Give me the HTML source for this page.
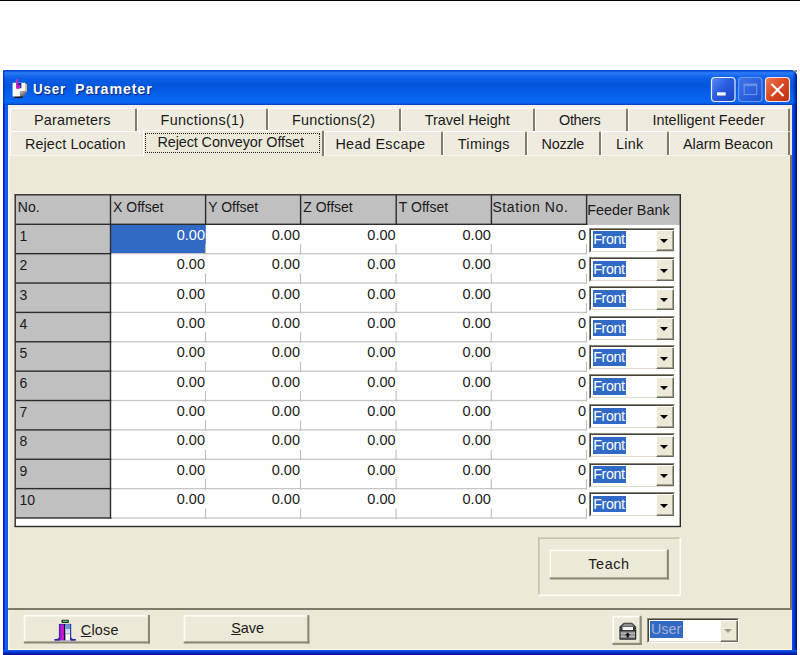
<!DOCTYPE html>
<html>
<head>
<meta charset="utf-8">
<title>User Parameter</title>
<style>
html,body{margin:0;padding:0;background:#fff;}
body{width:800px;height:655px;position:relative;overflow:hidden;font-family:"Liberation Sans",sans-serif;font-size:14.4px;color:#1a1a1a;}
.abs,.abs>*{position:absolute;}
div{box-sizing:border-box;}
#topline{left:0;top:0;width:800px;height:1px;background:#000;}
#win{left:2.8px;top:70px;width:794.4px;height:600px;border-radius:1.5px 6.5px 0 0;background:linear-gradient(90deg,#0019cf 0,#0422d4 1.2px,#1a5cf0 2.4px,#0f62e4 3.6px,#0a5add 5px,#0a5add calc(100% - 5.4px),#1c54dc calc(100% - 5px),#0444e4 calc(100% - 3.8px),#0030c0 calc(100% - 2.2px),#00138c calc(100% - 0.8px),#00138c 100%);}
#winb{left:2.8px;top:649.8px;width:794.4px;height:6px;background:linear-gradient(#2464f2 0,#0a48e4 1px,#0438dd 2px,#0024b0 3.4px,#001890 4.6px,#001588 6px);}
#titlebar{left:3px;top:70px;width:794px;height:35px;border-radius:1.5px 6.5px 0 0;
 background:linear-gradient(90deg,rgba(0,25,200,.75) 0,rgba(0,25,200,0) 2.5px,rgba(0,20,150,0) calc(100% - 4px),rgba(0,22,150,.55) calc(100% - 2px),rgba(0,16,130,.9) 100%),linear-gradient(#0a4cd6 0%,#0a50da 3%,#2c7cf4 8%,#1a6cf0 15%,#0a5ee6 26%,#0356dc 45%,#0560ea 70%,#0a68f4 90%,#0a5ee8 95%,#0540c0 99%);}
#title{top:81px;color:#fff;font-weight:bold;font-size:15px;letter-spacing:0.9px;text-shadow:1px 1px 1px #0a1e7a;white-space:pre;line-height:16px;}
#title span{position:absolute;top:0;display:inline-block;transform-origin:0 50%;}
#t1{transform:scaleX(0.895);} #t2{transform:scaleX(0.952);}
#client{left:8px;top:105px;width:784px;height:544.8px;background:#ece9d8;}
.tab{position:absolute;height:23px;background:#efecdf;border-left:1px solid #fff;border-top:1px solid #fff;border-right:2px solid #807d6a;border-radius:2px 2px 0 0;text-align:center;white-space:nowrap;line-height:16px;padding-top:3px;}
.ttx{position:absolute;white-space:nowrap;line-height:16px;}
.tab.sel{background:#ece9d8;}
.btn{position:absolute;background:#ece9d8;border-top:1px solid #fff;border-left:1px solid #fff;border-right:1px solid #6c6a5c;border-bottom:1px solid #6c6a5c;box-shadow:inset -1px -1px 0 #a5a290;text-align:center;white-space:nowrap;}
.hdr{position:absolute;background:#c0c0c0;border-right:1.5px solid #2a2a2a;border-bottom:1.5px solid #2a2a2a;white-space:nowrap;line-height:16px;font-size:14px;}
.num{position:absolute;text-align:right;white-space:nowrap;line-height:16px;font-size:14.5px;}
.txt{position:absolute;white-space:nowrap;line-height:16px;font-size:14px;}
.hl{position:absolute;background:#c4c4c4;height:1px;}
.tick{position:absolute;background:#c8c8c8;width:1px;}
.combo{position:absolute;background:#fff;border-top:1px solid #8a8774;border-left:1px solid #8a8774;border-right:1px solid #fff;border-bottom:1px solid #fff;}
.combo .in{position:absolute;left:0;top:0;right:0;bottom:0;border-top:1.5px solid #45433c;border-left:1.5px solid #45433c;border-right:1px solid #dedbcc;border-bottom:1px solid #dedbcc;}
.combo .sel{position:absolute;left:2.6px;top:2.9px;width:33.6px;height:16.6px;background:#316ac5;color:#fff;line-height:16px;font-size:14.3px;letter-spacing:-0.45px;padding-left:0.7px;white-space:nowrap;}
.combo .dd{position:absolute;right:-0.4px;top:1.4px;width:18.6px;bottom:0.2px;background:#ece9d8;border-top:1px solid #fffef8;border-left:1px solid #fffef8;border-right:1px solid #6a685c;border-bottom:1px solid #6a685c;box-shadow:inset -1px -1px 0 #a8a592;}
.combo .dd:after{content:"";position:absolute;left:3.6px;top:8.2px;border-left:4.4px solid transparent;border-right:4.4px solid transparent;border-top:4.8px solid #000;}
.combo .dd.usr:after{border-top-color:#a09d8c;}
</style>
</head>
<body>
<div id="topline" class="abs"></div>
<div id="win" class="abs"></div>
<div id="titlebar" class="abs"></div>
<svg class="abs" style="left:10px;top:76px" width="20" height="24" viewBox="10 76 20 24">
<defs><linearGradient id="gs" x1="0" y1="0" x2="1" y2="1"><stop offset="0" stop-color="#e0d8cc"/><stop offset=".55" stop-color="#8c8890"/><stop offset="1" stop-color="#1c1c30"/></linearGradient></defs>
<path d="M19.8 90.6 L25 90.6 L27.2 91.6 L22.6 97.6 L14.2 97.8 L13 96 L19.8 96 Z" fill="url(#gs)"/>
<path d="M14.2 96.4 L23 96.4 L22.2 98.1 L14.6 98.1 Z" fill="#0c0c20" opacity=".9"/>
<path d="M12.6 82.8 L25 82.8 L25 91 L19.9 91 L19.9 96.2 L12.6 96.2 Z" fill="#fbfaf6"/>
<path d="M25 82.8 L27 84.4 L27 91.8 L25 91 Z" fill="#cdbd9c"/>
<rect x="16.2" y="83" width="5.2" height="5.2" fill="#1f2f96"/>
<path d="M16.9 79.6 L16.9 86.6 Q16.9 88.4 18.4 88.2 Q19.6 88 19.4 85.6" stroke="#d820c8" stroke-width="1.7" fill="none" stroke-linecap="round"/>
</svg>
<div id="title" class="abs" style="left:0;width:300px;height:16px"><span id="t1" style="left:33.4px">User</span> <span id="t2" style="left:74.6px">Parameter</span></div>
<svg class="abs" style="left:710px;top:76px" width="82" height="27" viewBox="0 0 82 27">
<defs>
<linearGradient id="gb" x1="0" y1="0" x2="1" y2="1"><stop offset="0" stop-color="#5c8cf4"/><stop offset=".45" stop-color="#2a5ce0"/><stop offset="1" stop-color="#1a44c4"/></linearGradient>
<linearGradient id="gd" x1="0" y1="0" x2="1" y2="1"><stop offset="0" stop-color="#3f74ec"/><stop offset="1" stop-color="#1c50d4"/></linearGradient>
<linearGradient id="gr" x1="0" y1="0" x2="1" y2="1"><stop offset="0" stop-color="#ee7a58"/><stop offset=".45" stop-color="#dc4a24"/><stop offset="1" stop-color="#b8300c"/></linearGradient>
</defs>
<rect x="1.5" y="1.5" width="23.5" height="24" rx="3.5" fill="url(#gb)" stroke="#e8eefc" stroke-width="1.2"/>
<rect x="7" y="16.3" width="8.6" height="3.2" fill="#fff"/>
<rect x="28.5" y="1.5" width="23.5" height="24" rx="3.5" fill="url(#gd)" stroke="#6f98f2" stroke-width="1.2"/>
<rect x="34.2" y="8.5" width="12.4" height="10" fill="none" stroke="#6a8fe6" stroke-width="1.2"/>
<rect x="33.6" y="7.5" width="13.6" height="2.6" fill="#6a8fe6"/>
<rect x="55.5" y="1.5" width="24" height="24" rx="3.5" fill="url(#gr)" stroke="#f4e4dc" stroke-width="1.2"/>
<path d="M61.5 8 L73.5 20 M73.5 8 L61.5 20" stroke="#fff" stroke-width="2.1" stroke-linecap="butt"/>
</svg>
<div class="abs" style="left:792.5px;top:70px;width:4.7px;height:2.2px;background:linear-gradient(90deg,rgba(125,124,84,0),#7e7d58 70%,#8c8b6a)"></div>
<div id="client" class="abs"></div>
<div id="winb" class="abs"></div>
<div class="abs" style="left:8px;top:105px;width:2px;height:545px;background:#f6f4ea"></div>
<div class="abs" style="left:8px;top:105px;width:784px;height:3px;background:#f4f2e8"></div>
<div class="tab" style="left:10px;top:108px;width:127px;"></div>
<div class="ttx" style="left:34.00px;top:111.5px;letter-spacing:0.222px">Parameters</div>
<div class="tab" style="left:137px;top:108px;width:131px;"></div>
<div class="ttx" style="left:160.50px;top:111.5px;letter-spacing:0.341px">Functions(1)</div>
<div class="tab" style="left:268px;top:108px;width:133px;"></div>
<div class="ttx" style="left:292.00px;top:111.5px;letter-spacing:0.273px">Functions(2)</div>
<div class="tab" style="left:401px;top:108px;width:134px;"></div>
<div class="ttx" style="left:424.80px;top:111.5px;letter-spacing:-0.008px">Travel Height</div>
<div class="tab" style="left:535px;top:108px;width:93px;"></div>
<div class="ttx" style="left:559.00px;top:111.5px;letter-spacing:-0.300px">Others</div>
<div class="tab" style="left:628px;top:108px;width:162px;"></div>
<div class="ttx" style="left:652.40px;top:111.5px;letter-spacing:0.065px">Intelligent Feeder</div>
<div class="tab" style="left:10px;top:131px;width:131px;height:24px;border-right:none;"></div>
<div class="ttx" style="left:25.00px;top:136px;letter-spacing:0.086px">Reject Location</div>
<div class="tab" style="left:324px;top:131px;width:119px;height:24px;"></div>
<div class="ttx" style="left:335.40px;top:136px;letter-spacing:0.330px">Head Escape</div>
<div class="tab" style="left:443px;top:131px;width:84px;height:24px;"></div>
<div class="ttx" style="left:457.80px;top:136px;letter-spacing:0.317px">Timings</div>
<div class="tab" style="left:527px;top:131px;width:74px;height:24px;"></div>
<div class="ttx" style="left:541.60px;top:136px;letter-spacing:-0.260px">Nozzle</div>
<div class="tab" style="left:601px;top:131px;width:67.5px;height:24px;"></div>
<div class="ttx" style="left:616.00px;top:136px;letter-spacing:0.233px">Link</div>
<div class="tab" style="left:668.5px;top:131px;width:121.5px;height:24px;"></div>
<div class="ttx" style="left:683.00px;top:136px;letter-spacing:-0.045px">Alarm Beacon</div>
<div class="abs" style="left:10px;top:155px;width:780px;height:1px;background:#f8f6ee"></div>
<div class="tab sel" style="left:143px;top:130px;width:181px;height:26px;"><div style="position:absolute;left:1px;top:2px;right:2px;bottom:3px;border:1px dotted #222"></div></div>
<div class="ttx" style="left:157.50px;top:133.8px;letter-spacing:-0.095px">Reject Conveyor Offset</div>
<div class="abs" style="left:790px;top:155px;width:2px;height:455px;background:#77745f"></div>
<svg class="abs" style="left:0;top:0" width="800" height="655" viewBox="0 0 800 655"><rect x="15.20" y="194.80" width="665.10" height="331.70" fill="#fff"/><rect x="15.20" y="194.80" width="665.10" height="29.50" fill="#c0c0c0"/><rect x="586.60" y="194.80" width="93.70" height="30.10" fill="#c0c0c0"/><rect x="15.20" y="194.80" width="95.30" height="323.20" fill="#c0c0c0"/><rect x="111.00" y="224.80" width="94.80" height="28.77" fill="#316ac5"/><rect x="110.50" y="253.02" width="476.10" height="1.30" fill="#c6c6c6"/><rect x="204.95" y="244.17" width="1.10" height="10.40" fill="#bdbdbd"/><rect x="299.95" y="244.17" width="1.10" height="10.40" fill="#bdbdbd"/><rect x="395.55" y="244.17" width="1.10" height="10.40" fill="#bdbdbd"/><rect x="490.75" y="244.17" width="1.10" height="10.40" fill="#bdbdbd"/><rect x="585.95" y="244.17" width="1.10" height="10.40" fill="#bdbdbd"/><rect x="110.50" y="282.39" width="476.10" height="1.30" fill="#c6c6c6"/><rect x="204.95" y="273.54" width="1.10" height="10.40" fill="#bdbdbd"/><rect x="299.95" y="273.54" width="1.10" height="10.40" fill="#bdbdbd"/><rect x="395.55" y="273.54" width="1.10" height="10.40" fill="#bdbdbd"/><rect x="490.75" y="273.54" width="1.10" height="10.40" fill="#bdbdbd"/><rect x="585.95" y="273.54" width="1.10" height="10.40" fill="#bdbdbd"/><rect x="110.50" y="311.76" width="476.10" height="1.30" fill="#c6c6c6"/><rect x="204.95" y="302.91" width="1.10" height="10.40" fill="#bdbdbd"/><rect x="299.95" y="302.91" width="1.10" height="10.40" fill="#bdbdbd"/><rect x="395.55" y="302.91" width="1.10" height="10.40" fill="#bdbdbd"/><rect x="490.75" y="302.91" width="1.10" height="10.40" fill="#bdbdbd"/><rect x="585.95" y="302.91" width="1.10" height="10.40" fill="#bdbdbd"/><rect x="110.50" y="341.13" width="476.10" height="1.30" fill="#c6c6c6"/><rect x="204.95" y="332.28" width="1.10" height="10.40" fill="#bdbdbd"/><rect x="299.95" y="332.28" width="1.10" height="10.40" fill="#bdbdbd"/><rect x="395.55" y="332.28" width="1.10" height="10.40" fill="#bdbdbd"/><rect x="490.75" y="332.28" width="1.10" height="10.40" fill="#bdbdbd"/><rect x="585.95" y="332.28" width="1.10" height="10.40" fill="#bdbdbd"/><rect x="110.50" y="370.50" width="476.10" height="1.30" fill="#c6c6c6"/><rect x="204.95" y="361.65" width="1.10" height="10.40" fill="#bdbdbd"/><rect x="299.95" y="361.65" width="1.10" height="10.40" fill="#bdbdbd"/><rect x="395.55" y="361.65" width="1.10" height="10.40" fill="#bdbdbd"/><rect x="490.75" y="361.65" width="1.10" height="10.40" fill="#bdbdbd"/><rect x="585.95" y="361.65" width="1.10" height="10.40" fill="#bdbdbd"/><rect x="110.50" y="399.87" width="476.10" height="1.30" fill="#c6c6c6"/><rect x="204.95" y="391.02" width="1.10" height="10.40" fill="#bdbdbd"/><rect x="299.95" y="391.02" width="1.10" height="10.40" fill="#bdbdbd"/><rect x="395.55" y="391.02" width="1.10" height="10.40" fill="#bdbdbd"/><rect x="490.75" y="391.02" width="1.10" height="10.40" fill="#bdbdbd"/><rect x="585.95" y="391.02" width="1.10" height="10.40" fill="#bdbdbd"/><rect x="110.50" y="429.24" width="476.10" height="1.30" fill="#c6c6c6"/><rect x="204.95" y="420.39" width="1.10" height="10.40" fill="#bdbdbd"/><rect x="299.95" y="420.39" width="1.10" height="10.40" fill="#bdbdbd"/><rect x="395.55" y="420.39" width="1.10" height="10.40" fill="#bdbdbd"/><rect x="490.75" y="420.39" width="1.10" height="10.40" fill="#bdbdbd"/><rect x="585.95" y="420.39" width="1.10" height="10.40" fill="#bdbdbd"/><rect x="110.50" y="458.61" width="476.10" height="1.30" fill="#c6c6c6"/><rect x="204.95" y="449.76" width="1.10" height="10.40" fill="#bdbdbd"/><rect x="299.95" y="449.76" width="1.10" height="10.40" fill="#bdbdbd"/><rect x="395.55" y="449.76" width="1.10" height="10.40" fill="#bdbdbd"/><rect x="490.75" y="449.76" width="1.10" height="10.40" fill="#bdbdbd"/><rect x="585.95" y="449.76" width="1.10" height="10.40" fill="#bdbdbd"/><rect x="110.50" y="487.98" width="476.10" height="1.30" fill="#c6c6c6"/><rect x="204.95" y="479.13" width="1.10" height="10.40" fill="#bdbdbd"/><rect x="299.95" y="479.13" width="1.10" height="10.40" fill="#bdbdbd"/><rect x="395.55" y="479.13" width="1.10" height="10.40" fill="#bdbdbd"/><rect x="490.75" y="479.13" width="1.10" height="10.40" fill="#bdbdbd"/><rect x="585.95" y="479.13" width="1.10" height="10.40" fill="#bdbdbd"/><rect x="110.50" y="517.35" width="476.10" height="1.30" fill="#c6c6c6"/><rect x="204.95" y="508.50" width="1.10" height="10.40" fill="#bdbdbd"/><rect x="299.95" y="508.50" width="1.10" height="10.40" fill="#bdbdbd"/><rect x="395.55" y="508.50" width="1.10" height="10.40" fill="#bdbdbd"/><rect x="490.75" y="508.50" width="1.10" height="10.40" fill="#bdbdbd"/><rect x="585.95" y="508.50" width="1.10" height="10.40" fill="#bdbdbd"/><rect x="15.20" y="223.60" width="572.10" height="1.40" fill="#2c2c2c"/><rect x="109.80" y="194.80" width="1.40" height="30.20" fill="#2c2c2c"/><rect x="204.90" y="194.80" width="1.40" height="30.20" fill="#2c2c2c"/><rect x="299.90" y="194.80" width="1.40" height="30.20" fill="#2c2c2c"/><rect x="395.50" y="194.80" width="1.40" height="30.20" fill="#2c2c2c"/><rect x="490.70" y="194.80" width="1.40" height="30.20" fill="#2c2c2c"/><rect x="585.90" y="194.80" width="1.40" height="30.20" fill="#2c2c2c"/><rect x="109.80" y="224.30" width="1.40" height="294.40" fill="#2c2c2c"/><rect x="15.20" y="252.97" width="96.00" height="1.40" fill="#2c2c2c"/><rect x="15.20" y="282.34" width="96.00" height="1.40" fill="#2c2c2c"/><rect x="15.20" y="311.71" width="96.00" height="1.40" fill="#2c2c2c"/><rect x="15.20" y="341.08" width="96.00" height="1.40" fill="#2c2c2c"/><rect x="15.20" y="370.45" width="96.00" height="1.40" fill="#2c2c2c"/><rect x="15.20" y="399.82" width="96.00" height="1.40" fill="#2c2c2c"/><rect x="15.20" y="429.19" width="96.00" height="1.40" fill="#2c2c2c"/><rect x="15.20" y="458.56" width="96.00" height="1.40" fill="#2c2c2c"/><rect x="15.20" y="487.93" width="96.00" height="1.40" fill="#2c2c2c"/><rect x="15.20" y="517.30" width="96.00" height="1.40" fill="#2c2c2c"/><rect x="14.50" y="194.10" width="666.50" height="1.40" fill="#2c2c2c"/><rect x="14.50" y="525.80" width="666.50" height="1.40" fill="#2c2c2c"/><rect x="14.50" y="194.80" width="1.40" height="331.70" fill="#2c2c2c"/><rect x="679.60" y="194.80" width="1.40" height="331.70" fill="#2c2c2c"/></svg>
<div class="txt" style="left:17.80px;top:199.2px;">No.</div>
<div class="txt" style="left:113.10px;top:199.2px;">X Offset</div>
<div class="txt" style="left:208.20px;top:199.2px;">Y Offset</div>
<div class="txt" style="left:303.20px;top:199.2px;">Z Offset</div>
<div class="txt" style="left:398.80px;top:199.2px;">T Offset</div>
<div class="txt" style="left:494.00px;top:199.2px;letter-spacing:0.62px;margin-left:-1.6px;">Station No.</div>
<div class="txt" style="left:587.2px;top:202px;font-size:14.4px">Feeder Bank</div>
<div class="txt" style="left:19.40px;top:227.90px">1</div>
<div class="num" style="left:110.50px;top:226.80px;width:94.50px;color:#fff">0.00</div>
<div class="num" style="left:205.60px;top:226.80px;width:94.40px">0.00</div>
<div class="num" style="left:300.60px;top:226.80px;width:95.00px">0.00</div>
<div class="num" style="left:396.20px;top:226.80px;width:94.60px">0.00</div>
<div class="num" style="left:491.40px;top:226.80px;width:94.60px">0</div>
<div class="combo" style="left:589px;top:227.60px;width:85.8px;height:25px"><div class="in"></div><div class="sel">Front</div><div class="dd"></div></div>
<div class="txt" style="left:19.40px;top:257.27px">2</div>
<div class="num" style="left:110.50px;top:256.17px;width:94.50px">0.00</div>
<div class="num" style="left:205.60px;top:256.17px;width:94.40px">0.00</div>
<div class="num" style="left:300.60px;top:256.17px;width:95.00px">0.00</div>
<div class="num" style="left:396.20px;top:256.17px;width:94.60px">0.00</div>
<div class="num" style="left:491.40px;top:256.17px;width:94.60px">0</div>
<div class="combo" style="left:589px;top:256.97px;width:85.8px;height:25px"><div class="in"></div><div class="sel">Front</div><div class="dd"></div></div>
<div class="txt" style="left:19.40px;top:286.64px">3</div>
<div class="num" style="left:110.50px;top:285.54px;width:94.50px">0.00</div>
<div class="num" style="left:205.60px;top:285.54px;width:94.40px">0.00</div>
<div class="num" style="left:300.60px;top:285.54px;width:95.00px">0.00</div>
<div class="num" style="left:396.20px;top:285.54px;width:94.60px">0.00</div>
<div class="num" style="left:491.40px;top:285.54px;width:94.60px">0</div>
<div class="combo" style="left:589px;top:286.34px;width:85.8px;height:25px"><div class="in"></div><div class="sel">Front</div><div class="dd"></div></div>
<div class="txt" style="left:19.40px;top:316.01px">4</div>
<div class="num" style="left:110.50px;top:314.91px;width:94.50px">0.00</div>
<div class="num" style="left:205.60px;top:314.91px;width:94.40px">0.00</div>
<div class="num" style="left:300.60px;top:314.91px;width:95.00px">0.00</div>
<div class="num" style="left:396.20px;top:314.91px;width:94.60px">0.00</div>
<div class="num" style="left:491.40px;top:314.91px;width:94.60px">0</div>
<div class="combo" style="left:589px;top:315.71px;width:85.8px;height:25px"><div class="in"></div><div class="sel">Front</div><div class="dd"></div></div>
<div class="txt" style="left:19.40px;top:345.38px">5</div>
<div class="num" style="left:110.50px;top:344.28px;width:94.50px">0.00</div>
<div class="num" style="left:205.60px;top:344.28px;width:94.40px">0.00</div>
<div class="num" style="left:300.60px;top:344.28px;width:95.00px">0.00</div>
<div class="num" style="left:396.20px;top:344.28px;width:94.60px">0.00</div>
<div class="num" style="left:491.40px;top:344.28px;width:94.60px">0</div>
<div class="combo" style="left:589px;top:345.08px;width:85.8px;height:25px"><div class="in"></div><div class="sel">Front</div><div class="dd"></div></div>
<div class="txt" style="left:19.40px;top:374.75px">6</div>
<div class="num" style="left:110.50px;top:373.65px;width:94.50px">0.00</div>
<div class="num" style="left:205.60px;top:373.65px;width:94.40px">0.00</div>
<div class="num" style="left:300.60px;top:373.65px;width:95.00px">0.00</div>
<div class="num" style="left:396.20px;top:373.65px;width:94.60px">0.00</div>
<div class="num" style="left:491.40px;top:373.65px;width:94.60px">0</div>
<div class="combo" style="left:589px;top:374.45px;width:85.8px;height:25px"><div class="in"></div><div class="sel">Front</div><div class="dd"></div></div>
<div class="txt" style="left:19.40px;top:404.12px">7</div>
<div class="num" style="left:110.50px;top:403.02px;width:94.50px">0.00</div>
<div class="num" style="left:205.60px;top:403.02px;width:94.40px">0.00</div>
<div class="num" style="left:300.60px;top:403.02px;width:95.00px">0.00</div>
<div class="num" style="left:396.20px;top:403.02px;width:94.60px">0.00</div>
<div class="num" style="left:491.40px;top:403.02px;width:94.60px">0</div>
<div class="combo" style="left:589px;top:403.82px;width:85.8px;height:25px"><div class="in"></div><div class="sel">Front</div><div class="dd"></div></div>
<div class="txt" style="left:19.40px;top:433.49px">8</div>
<div class="num" style="left:110.50px;top:432.39px;width:94.50px">0.00</div>
<div class="num" style="left:205.60px;top:432.39px;width:94.40px">0.00</div>
<div class="num" style="left:300.60px;top:432.39px;width:95.00px">0.00</div>
<div class="num" style="left:396.20px;top:432.39px;width:94.60px">0.00</div>
<div class="num" style="left:491.40px;top:432.39px;width:94.60px">0</div>
<div class="combo" style="left:589px;top:433.19px;width:85.8px;height:25px"><div class="in"></div><div class="sel">Front</div><div class="dd"></div></div>
<div class="txt" style="left:19.40px;top:462.86px">9</div>
<div class="num" style="left:110.50px;top:461.76px;width:94.50px">0.00</div>
<div class="num" style="left:205.60px;top:461.76px;width:94.40px">0.00</div>
<div class="num" style="left:300.60px;top:461.76px;width:95.00px">0.00</div>
<div class="num" style="left:396.20px;top:461.76px;width:94.60px">0.00</div>
<div class="num" style="left:491.40px;top:461.76px;width:94.60px">0</div>
<div class="combo" style="left:589px;top:462.56px;width:85.8px;height:25px"><div class="in"></div><div class="sel">Front</div><div class="dd"></div></div>
<div class="txt" style="left:19.40px;top:492.23px">10</div>
<div class="num" style="left:110.50px;top:491.13px;width:94.50px">0.00</div>
<div class="num" style="left:205.60px;top:491.13px;width:94.40px">0.00</div>
<div class="num" style="left:300.60px;top:491.13px;width:95.00px">0.00</div>
<div class="num" style="left:396.20px;top:491.13px;width:94.60px">0.00</div>
<div class="num" style="left:491.40px;top:491.13px;width:94.60px">0</div>
<div class="combo" style="left:589px;top:491.93px;width:85.8px;height:25px"><div class="in"></div><div class="sel">Front</div><div class="dd"></div></div>
<svg class="abs" style="left:0;top:0" width="800" height="655" viewBox="0 0 800 655"><rect x="538.10" y="537.40" width="142.90" height="1.50" fill="#c3c0ad"/><rect x="538.10" y="537.40" width="1.50" height="58.70" fill="#c3c0ad"/><rect x="538.10" y="594.60" width="142.90" height="1.50" fill="#fffef5"/><rect x="679.50" y="537.40" width="1.50" height="58.70" fill="#fffef5"/><rect x="549.70" y="549.60" width="119.20" height="29.90" fill="#ece9d8"/><rect x="549.70" y="549.60" width="119.20" height="1.50" fill="#fffef8"/><rect x="549.70" y="549.60" width="1.50" height="29.90" fill="#fffef8"/><rect x="549.70" y="577.40" width="119.20" height="2.10" fill="#8a8775"/><rect x="666.80" y="549.60" width="2.10" height="29.90" fill="#8a8775"/></svg>
<div class="ttx" style="left:588.3px;top:556.1px;letter-spacing:0.6px">Teach</div>
<div class="abs" style="left:8px;top:608.3px;width:784px;height:2.2px;background:#7d7a68"></div>
<div class="abs" style="left:8px;top:610.5px;width:782px;height:1px;background:#efecdf"></div>
<div class="abs" style="left:8px;top:648.6px;width:784px;height:1.2px;background:#fffef6"></div>
<svg class="abs" style="left:0;top:0" width="800" height="655" viewBox="0 0 800 655"><rect x="23.80" y="615.00" width="126.20" height="28.50" fill="#ece9d8"/><rect x="23.80" y="615.00" width="126.20" height="1.50" fill="#fffef8"/><rect x="23.80" y="615.00" width="1.50" height="28.50" fill="#fffef8"/><rect x="23.80" y="641.40" width="126.20" height="2.10" fill="#8a8775"/><rect x="147.90" y="615.00" width="2.10" height="28.50" fill="#8a8775"/></svg>
<svg class="abs" style="left:53px;top:618px" width="25" height="24" viewBox="53 618 25 24">
<rect x="61.5" y="619.8" width="7.4" height="3.1" rx=".8" fill="#1c2c20"/>
<rect x="62.8" y="620.6" width="4.8" height="1.5" fill="#38d060"/>
<rect x="58.9" y="623.9" width="12.3" height="16.4" fill="#2020a0"/>
<rect x="59.9" y="624.6" width="4.3" height="15.6" fill="#c418c8"/>
<rect x="59.2" y="624.6" width="1.3" height="15.6" fill="#5028b8"/>
<rect x="64.1" y="624.2" width="1.3" height="16" fill="#101028"/>
<rect x="65.4" y="624.6" width="4.7" height="15.6" fill="#f4f6fa"/>
<rect x="65.4" y="624.6" width="4.7" height="4.4" fill="#6898dc"/>
<rect x="65.4" y="629.6" width="4.7" height="1" fill="#a8c4e8"/>
<rect x="65.4" y="631.4" width="4.7" height="1" fill="#b8cce8"/>
<rect x="65.4" y="633.2" width="4.7" height="1" fill="#90a0c0"/>
<path d="M54.6 639.4 Q58 639.6 59.2 637.6 L59.2 640.4 L54.8 640.4 Z" fill="#2828a0"/>
<path d="M75.6 639.4 Q72.2 639.6 71 637.6 L71 640.4 L75.4 640.4 Z" fill="#2828a0"/>
<path d="M54.4 639.7 L59.4 639.7 M70.8 639.7 L75.8 639.7" stroke="#2828a0" stroke-width="1.4"/>
</svg>
<svg class="abs" style="left:0;top:0" width="800" height="655" viewBox="0 0 800 655"><rect x="183.70" y="615.10" width="125.70" height="28.40" fill="#ece9d8"/><rect x="183.70" y="615.10" width="125.70" height="1.50" fill="#fffef8"/><rect x="183.70" y="615.10" width="1.50" height="28.40" fill="#fffef8"/><rect x="183.70" y="641.40" width="125.70" height="2.10" fill="#8a8775"/><rect x="307.30" y="615.10" width="2.10" height="28.40" fill="#8a8775"/></svg>
<div class="ttx" style="left:80.8px;top:622.3px;letter-spacing:0.2px"><u>C</u>lose</div>
<div class="ttx" style="left:231.2px;top:620px"><u>S</u>ave</div>
<svg class="abs" style="left:0;top:0" width="800" height="655" viewBox="0 0 800 655"><rect x="612.40" y="615.80" width="29.40" height="29.20" fill="#ece9d8"/><rect x="612.40" y="615.80" width="29.40" height="1.60" fill="#fffef8"/><rect x="612.40" y="615.80" width="1.60" height="29.20" fill="#fffef8"/><rect x="612.40" y="642.80" width="29.40" height="2.20" fill="#8f8c7a"/><rect x="639.60" y="615.80" width="2.20" height="29.20" fill="#8f8c7a"/></svg>
<svg class="abs" style="left:616px;top:620px" width="24" height="22" viewBox="616 620 24 22">
<path d="M619.4 631 L619.4 626.8 L623.8 622.8 L632 622.8 L636.2 626.8 L636.2 631 Z" fill="#3c3c3c"/>
<path d="M621.4 626.4 L624.4 623.7 L631.4 623.7 L634.4 626.4 Z" fill="#8e8e8e"/>
<rect x="622.5" y="627" width="10.5" height="3.4" fill="#f6f6f2"/>
<rect x="619.4" y="630.2" width="16.8" height="9.5" rx=".6" fill="#2a2a2a"/>
<rect x="620.6" y="631.4" width="14.4" height="7" fill="#8c8c8c"/>
<rect x="620.6" y="632.7" width="14.4" height="1.1" fill="#c2c2c2"/>
<rect x="620.6" y="635.7" width="14.4" height="1.1" fill="#c8c8c8"/>
<path d="M627.7 632.4 L630.5 635.3 L628.8 635.3 L628.8 637.6 L626.6 637.6 L626.6 635.3 L624.9 635.3 Z" fill="#0c0c0c"/>
</svg>
<div class="combo" style="left:646.9px;top:617.5px;width:92.2px;height:25.2px"><div class="in"></div><div class="sel" style="color:#aab0d4;left:1.9px;top:2.6px;width:33.2px;height:16.6px;padding-left:1.2px;letter-spacing:0">User</div><div class="dd usr"></div></div>
</body>
</html>
